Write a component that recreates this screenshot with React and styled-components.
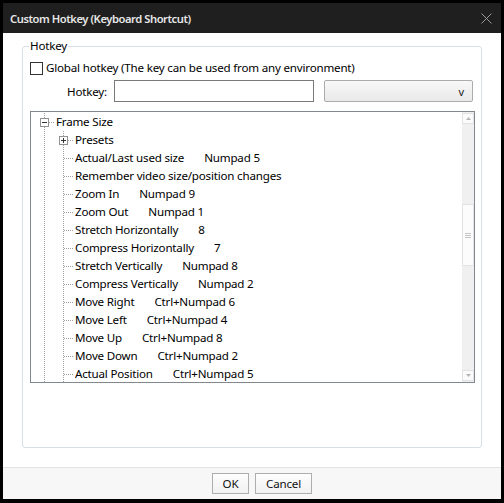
import React from "react";
import styled, { createGlobalStyle } from "styled-components";

const Global = createGlobalStyle`
  html, body { margin: 0; padding: 0; background: #000; }
  body { font-family: "Segoe UI", "Noto Sans", sans-serif; font-size: 11.6px; letter-spacing: -0.2px; color: #000; }
  * { box-sizing: border-box; }
`;

const Window = styled.div`
  width: 504px;
  height: 503px;
  background: #000;
  padding: 3px 3px 4px 3px;
  display: flex;
  flex-direction: column;
`;

const TitleBar = styled.div`
  height: 30px;
  flex: none;
  background: #1f1f1f;
  display: flex;
  align-items: center;
  justify-content: space-between;
  padding: 0 9px 0 7px;
`;

const Title = styled.div`
  color: #e6e6e6;
  font-weight: 600;
  font-size: 11.2px;
  letter-spacing: -0.45px;
`;

const Body = styled.div`
  flex: 1;
  background: #fff;
  padding: 13px 19px 19px 19px;
  display: flex;
`;

const GroupBox = styled.div`
  position: relative;
  flex: 1;
  border: 1px solid #d5dfe5;
  border-radius: 3px;
  padding: 14px 6px 0 7px;
  display: flex;
  flex-direction: column;
`;

const Legend = styled.div`
  position: absolute;
  top: -9px;
  left: 6px;
  background: #fff;
  padding: 0 1px;
  line-height: 16px;
`;

const CheckRow = styled.label`
  display: flex;
  align-items: center;
  height: 14px;
  gap: 3px;
  line-height: 14px;
`;

const CheckBox = styled.span`
  width: 13px;
  height: 13px;
  border: 1px solid #333;
  background: #fff;
  flex: none;
`;

const FieldRow = styled.div`
  display: flex;
  align-items: center;
  margin-top: 5px;
  height: 22px;
`;

const FieldLabel = styled.div`
  width: 77px;
  text-align: right;
  margin-right: 7px;
`;

const TextInput = styled.div`
  width: 200px;
  height: 22px;
  border: 1px solid #7a7a7a;
  background: #fff;
`;

const Select = styled.div`
  width: 149px;
  height: 22px;
  margin-left: 10px;
  border: 1px solid #acacac;
  border-radius: 2px;
  background: linear-gradient(#f8f8f8, #e9e9e9);
  display: flex;
  align-items: center;
  justify-content: flex-end;
  padding-right: 8px;
  font-size: 11px;
  color: #222;
`;

const TreeBox = styled.div`
  margin-top: 9px;
  width: 445px;
  height: 272px;
  border: 1px solid #828790;
  display: flex;
  overflow: hidden;
`;

const TreeList = styled.div`
  flex: 1;
  padding-top: 1px;
  overflow: hidden;
`;

const Row = styled.div`
  height: 18px;
  display: flex;
  align-items: center;
  white-space: nowrap;
`;

const Name = styled.span`
  line-height: 18px;
`;

const Key = styled.span`
  margin-left: 20px;
  line-height: 18px;
`;

const ScrollBar = styled.div`
  width: 12px;
  flex: none;
  background: #f0f0f0;
  display: flex;
  flex-direction: column;
  padding: 1px 0;
`;

const ScrollBtn = styled.div`
  height: 11px;
  border: 1px solid #e2e2e2;
  background: #fbfbfb;
  display: flex;
  align-items: center;
  justify-content: center;
`;

const Track = styled.div`
  flex: ${(p) => p.$grow};
`;

const Thumb = styled.div`
  height: 62px;
  border: 1px solid #e2e2e2;
  background: #fcfcfc;
  display: flex;
  align-items: center;
  justify-content: center;
`;

const Footer = styled.div`
  height: 32px;
  flex: none;
  background: #f7f7f7;
  border-top: 1px solid #e3e3e3;
  display: flex;
  align-items: center;
  padding-left: 209px;
  gap: 6px;
`;

const Button = styled.div`
  width: ${(p) => p.$w}px;
  height: 21px;
  border: 1px solid #adadad;
  background: linear-gradient(#fdfdfd, #f1f1f1);
  display: flex;
  align-items: center;
  justify-content: center;
  color: #111;
`;

const DOT = "#a0a0a0";

function Connector({ level, box }) {
  const w = level === 0 ? 25 : 44;
  return (
    <svg width={w} height="18" style={{ flex: "none", display: "block" }}>
      <line x1="13.5" y1="0" x2="13.5" y2="18" stroke={DOT} strokeDasharray="1 1" />
      {level === 0 && (
        <line x1="18" y1="9.5" x2="24" y2="9.5" stroke={DOT} strokeDasharray="1 1" />
      )}
      {level === 1 && (
        <>
          <line x1="32.5" y1="0" x2="32.5" y2="18" stroke={DOT} strokeDasharray="1 1" />
          <line x1={box ? 37 : 33} y1="9.5" x2="42" y2="9.5" stroke={DOT} strokeDasharray="1 1" />
        </>
      )}
      {box && (
        <g transform={`translate(${level === 0 ? 9 : 28} 5)`}>
          <rect x="0.5" y="0.5" width="8" height="8" fill="#fff" stroke="#919191" />
          <line x1="2" y1="4.5" x2="7" y2="4.5" stroke="#333" />
          {box === "plus" && <line x1="4.5" y1="2" x2="4.5" y2="7" stroke="#333" />}
        </g>
      )}
    </svg>
  );
}

const items = [
  ["Presets", "", "plus"],
  ["Actual/Last used size", "Numpad 5"],
  ["Remember video size/position changes", ""],
  ["Zoom In", "Numpad 9"],
  ["Zoom Out", "Numpad 1"],
  ["Stretch Horizontally", "8"],
  ["Compress Horizontally", "7"],
  ["Stretch Vertically", "Numpad 8"],
  ["Compress Vertically", "Numpad 2"],
  ["Move Right", "Ctrl+Numpad 6"],
  ["Move Left", "Ctrl+Numpad 4"],
  ["Move Up", "Ctrl+Numpad 8"],
  ["Move Down", "Ctrl+Numpad 2"],
  ["Actual Position", "Ctrl+Numpad 5"],
];

export default function App() {
  return (
    <>
      <Global />
      <Window>
        <TitleBar>
          <Title>Custom Hotkey (Keyboard Shortcut)</Title>
          <svg width="11" height="11" viewBox="0 0 11 11">
            <path d="M0.5 0.5 L10.5 10.5 M10.5 0.5 L0.5 10.5" stroke="#9b9b9b" strokeWidth="1" />
          </svg>
        </TitleBar>
        <Body>
          <GroupBox>
            <Legend>Hotkey</Legend>
            <CheckRow>
              <CheckBox />
              <span>Global hotkey (The key can be used from any environment)</span>
            </CheckRow>
            <FieldRow>
              <FieldLabel>Hotkey:</FieldLabel>
              <TextInput />
              <Select>v</Select>
            </FieldRow>
            <TreeBox>
              <TreeList>
                <Row>
                  <Connector level={0} box="minus" />
                  <Name>Frame Size</Name>
                </Row>
                {items.map(([n, k, box]) => (
                  <Row key={n}>
                    <Connector level={1} box={box} />
                    <Name>{n}</Name>
                    {k && <Key>{k}</Key>}
                  </Row>
                ))}
              </TreeList>
              <ScrollBar>
                <ScrollBtn>
                  <svg width="5" height="3"><path d="M0 3 L2.5 0 L5 3 Z" fill="#b5b5b5" /></svg>
                </ScrollBtn>
                <Track $grow={80} />
                <Thumb>
                  <svg width="6" height="5"><path d="M0 0.5H6M0 2.5H6M0 4.5H6" stroke="#c4c4c4" /></svg>
                </Thumb>
                <Track $grow={104} />
                <ScrollBtn>
                  <svg width="5" height="3"><path d="M0 0 L2.5 3 L5 0 Z" fill="#b5b5b5" /></svg>
                </ScrollBtn>
              </ScrollBar>
            </TreeBox>
          </GroupBox>
        </Body>
        <Footer>
          <Button $w={37}>OK</Button>
          <Button $w={57}>Cancel</Button>
        </Footer>
      </Window>
    </>
  );
}
